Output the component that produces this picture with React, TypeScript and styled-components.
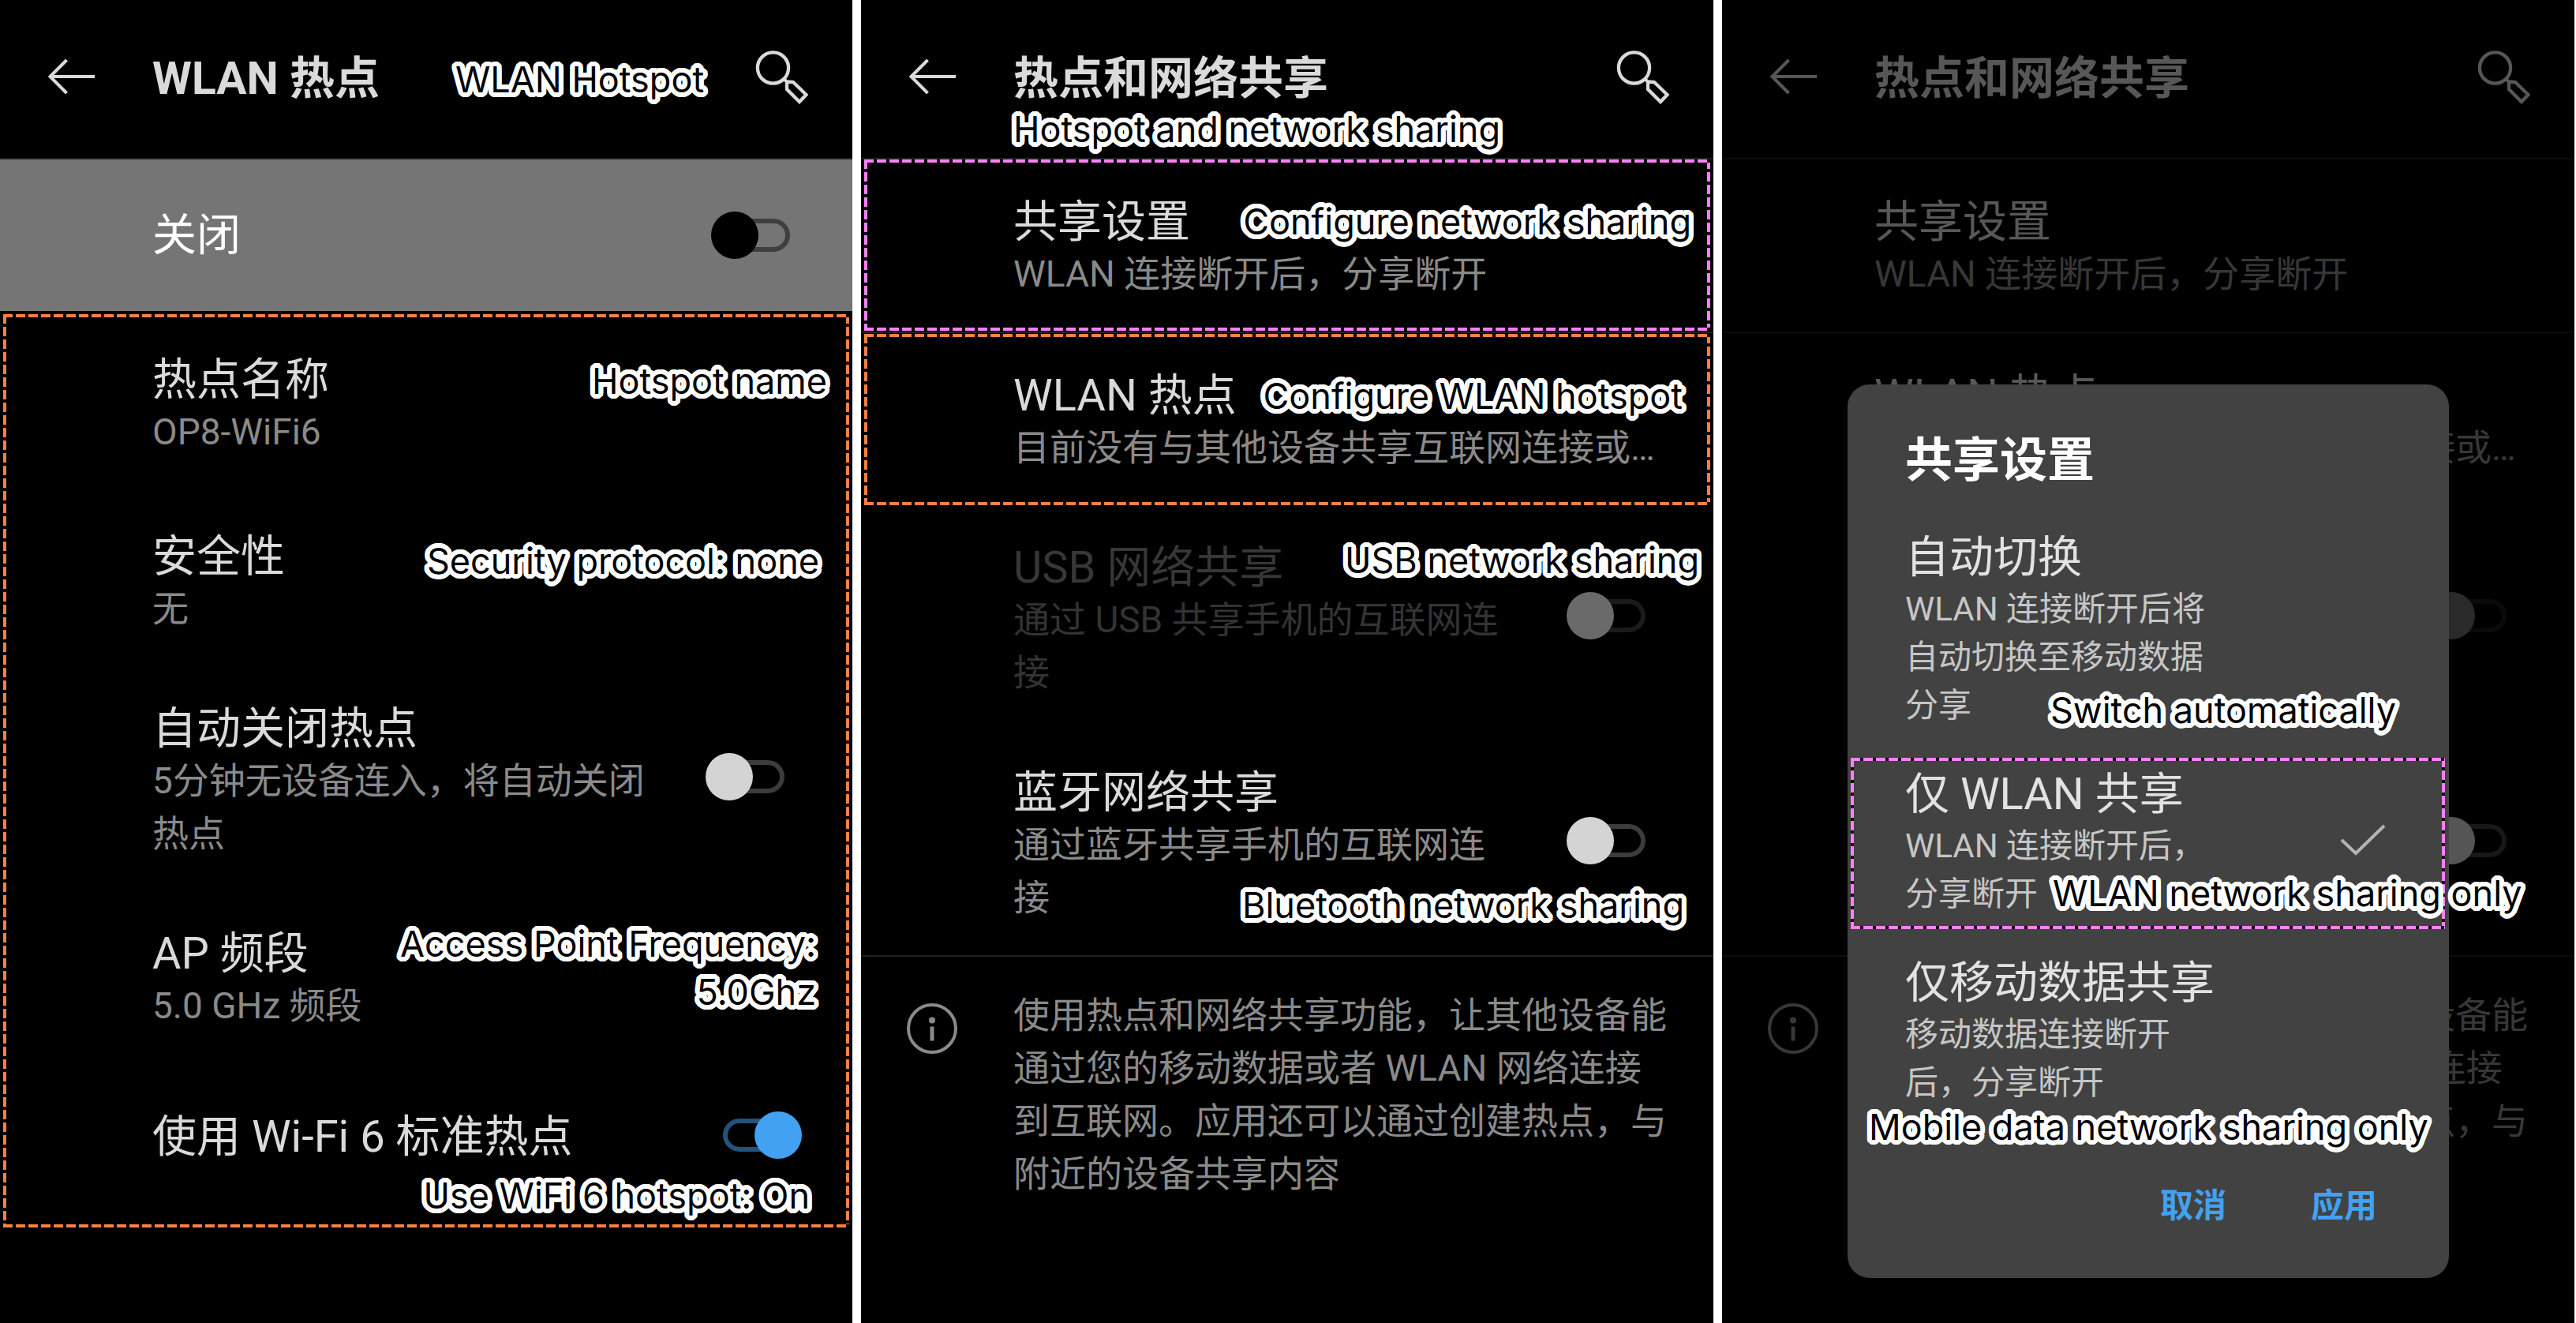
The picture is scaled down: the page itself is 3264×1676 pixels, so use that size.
import React, { useState } from 'react';
import styled, { createGlobalStyle, css } from 'styled-components';

const GlobalStyle = createGlobalStyle`
  *, *::before, *::after { box-sizing: border-box; }
  body {
    margin: 0;
    background: #fff;
    font-family: Roboto, "Noto Sans CJK SC", sans-serif;
    font-size: 46px;
    line-height: 67px;
    color: #dadada;
  }
  h1, h2, p { margin: 0; }
  button { font: inherit; color: inherit; background: none; border: 0; padding: 0; cursor: pointer; }
`;

const orange = '#ff8040';
const pink = '#ff80ff';

/* Solid round outline: copies of the text placed evenly on a circle. */
const roundOutline = (radius: number, color: string) =>
  Array.from({ length: 24 }, (_, i) => {
    const a = (i * Math.PI) / 12;
    return `${(Math.cos(a) * radius).toFixed(2)}px ${(Math.sin(a) * radius).toFixed(2)}px 0 ${color}`;
  }).join(', ');

const Board = styled.main`
  display: grid;
  grid-template-columns: repeat(3, minmax(0, 1fr));
  gap: 11px;
  padding-right: 2px;
  min-height: 100vh;
`;

const Screen = styled.section`
  position: relative;
  background: #000;
`;

const Header = styled.header`
  position: relative;
  display: flex;
  align-items: center;
  height: 202px;
  padding: 0 56px 6px 60px;
  border-bottom: 2px solid #202020;
`;

const IconButton = styled.button`
  display: flex;
  flex: none;
`;

const Title = styled.h1`
  flex: 1;
  padding: 6px 0 0 73px;
  font-size: 57px;
  font-weight: 700;
  line-height: 80px;
`;

const List = styled.div`
  position: relative;
`;

const HotspotList = styled(List)`
  padding-bottom: 26px;
`;

const Row = styled.div<{ $divided?: boolean; $first?: boolean; $single?: boolean }>`
  position: relative;
  display: flex;
  align-items: center;
  gap: 60px;
  padding: 46px 64px 39px 193px;
  ${(p) => p.$first && css`padding-top: 54px; padding-bottom: 45px;`}
  ${(p) => p.$single && css`padding-top: 60px; padding-bottom: 60px;`}
  ${(p) => p.$divided && css`border-bottom: 2px solid #202020;`}

  & > input {
    margin-bottom: ${(p) => (p.$single ? '4px' : '12px')};
  }
`;

const MasterRow = styled.div`
  display: flex;
  align-items: center;
  justify-content: space-between;
  height: 192px;
  padding: 0 57px 0 193px;
  background: #757575;
  color: #fff;
`;

const RowText = styled.div`
  flex: 1;
  min-width: 0;
`;

const RowTitle = styled.label<{ $disabled?: boolean }>`
  display: block;
  font-size: 56px;
  line-height: 66px;
  white-space: nowrap;
  color: ${(p) => (p.$disabled ? '#373737' : 'inherit')};
`;

const Summary = styled.p<{ $disabled?: boolean }>`
  color: ${(p) => (p.$disabled ? '#333' : '#8a8a8a')};
`;

const Switch = styled.input.attrs({ type: 'checkbox', role: 'switch' })<{ $master?: boolean }>`
  appearance: none;
  position: relative;
  flex: none;
  width: 122px;
  height: 60px;
  margin: 0;

  &::before {
    content: '';
    position: absolute;
    inset: 9px 22px;
    border: 6px solid ${(p) => (p.$master ? '#3f3f3f' : '#3c3c3c')};
    border-radius: 21px;
  }
  &::after {
    content: '';
    position: absolute;
    top: 0;
    left: 0;
    width: 60px;
    height: 60px;
    border-radius: 50%;
    background: ${(p) => (p.$master ? '#000' : '#d4d4d4')};
  }
  &:disabled::before { border-color: #1b1b1b; }
  &:disabled::after { background: #6a6a6a; }
  &:checked::before { border-color: #22537c; }
  &:checked::after { left: auto; right: 0; background: #42a1f1; }
`;

const Note = styled.span<{ $top: number; $right?: number; $left?: number }>`
  position: absolute;
  z-index: 2;
  top: ${(p) => p.$top}px;
  ${(p) => p.$right !== undefined && `right: ${p.$right}px;`}
  ${(p) => p.$left !== undefined && `left: ${p.$left}px;`}
  width: max-content;
  font-family: Inter, "Liberation Sans", sans-serif;
  font-size: 45px;
  font-weight: 400;
  line-height: 61px;
  text-align: right;
  white-space: pre-line;
  color: #000;
  text-shadow: ${roundOutline(6, '#fff')};
  pointer-events: none;
`;

const Outline = styled.span<{ $color: string; $inset?: string }>`
  position: absolute;
  z-index: 1;
  inset: ${(p) => p.$inset ?? '4px'};
  pointer-events: none;
  --across: linear-gradient(90deg, ${(p) => p.$color} 12px, #000 12px);
  --down: linear-gradient(${(p) => p.$color} 12px, #000 12px);
  background:
    var(--across) 0 0 / 16px 4px repeat-x,
    var(--across) 0 100% / 16px 4px repeat-x,
    var(--down) 0 0 / 4px 16px repeat-y,
    var(--down) 100% 0 / 4px 16px repeat-y;
`;

const Info = styled.div`
  display: flex;
  align-items: flex-start;
  gap: 71px;
  padding: 41px 56px 42px 58px;
  border-top: 2px solid #202020;
`;

const InfoIcon = styled.svg`
  flex: none;
  margin-top: 18px;
`;

const Scrim = styled.div`
  position: absolute;
  inset: 0;
  display: flex;
  align-items: flex-start;
  padding: 487px 159px 0;
  background: rgba(0, 0, 0, 0.6);
`;

const Dialog = styled.form`
  flex: 1;
  min-width: 0;
  padding-top: 57px;
  border-radius: 28px;
  background: #424242;
`;

const DialogTitle = styled.h2`
  padding: 0 73px 20px;
  font-size: 60px;
  font-weight: 700;
  line-height: 80px;
  color: #fff;
`;

const Option = styled.label`
  position: relative;
  display: flex;
  align-items: center;
  justify-content: space-between;
  padding: 28px 80px 20px 73px;
`;

const OptionText = styled.span`
  width: 400px;
`;

const OptionTitle = styled.span`
  display: block;
  font-size: 56px;
  line-height: 69px;
  white-space: nowrap;
  color: #e2e2e2;
`;

const OptionSummary = styled.span`
  display: block;
  font-size: 42px;
  line-height: 61px;
  color: #c6c6c6;
`;

const HiddenRadio = styled.input.attrs({ type: 'radio' })`
  position: absolute;
  opacity: 0;
`;

const CheckMark = styled.svg`
  margin-bottom: 8px;
`;

const Actions = styled.div`
  display: flex;
  justify-content: flex-end;
  gap: 35px;
  padding: 75px 55px 61px;
`;

const ActionButton = styled.button.attrs({ type: 'button' })`
  && {
    padding: 0 36px;
    font-size: 42px;
    font-weight: 700;
    line-height: 61px;
    color: #42a1f1;
  }
`;

function BackIcon() {
  return (
    <svg width="60" height="46" viewBox="0 0 60 46" fill="none" stroke="currentColor" strokeWidth="4">
      <path d="M3.500 23H60M24.500 2L3.500 23l21 21" />
    </svg>
  );
}

function SearchIcon() {
  return (
    <svg width="68" height="70" viewBox="0 0 68 70" fill="none" stroke="currentColor" strokeWidth="4.300">
      <circle cx="23.500" cy="24" r="19.600" />
      <path d="M37 38l4 3.500 8 0.500 16.500 16-8.500 9-16-16v-9.500" />
    </svg>
  );
}

function CheckIcon() {
  return (
    <CheckMark width="58" height="42" viewBox="0 0 58 42" fill="none" stroke="#b4b4b4" strokeWidth="4">
      <path d="M2 21l18 17L56 3" />
    </CheckMark>
  );
}

function TopBar({ title, children }: { title: string; children?: React.ReactNode }) {
  return (
    <Header>
      <IconButton type="button" aria-label="返回"><BackIcon /></IconButton>
      <Title>{title}</Title>
      <IconButton type="button" aria-label="搜索"><SearchIcon /></IconButton>
      {children}
    </Header>
  );
}

function HotspotScreen() {
  const [master, setMaster] = useState(false);
  const [autoOff, setAutoOff] = useState(false);
  const [wifi6, setWifi6] = useState(true);
  return (
    <Screen>
      <TopBar title="WLAN 热点">
        <Note $top={70} $left={577}>WLAN Hotspot</Note>
      </TopBar>
      <MasterRow>
        <RowTitle htmlFor="master">关闭</RowTitle>
        <Switch id="master" $master checked={master} onChange={() => setMaster(!master)} />
      </MasterRow>
      <HotspotList>
        <Row $first>
          <RowText>
            <RowTitle as="div">热点名称</RowTitle>
            <Summary>OP8-WiFi6</Summary>
          </RowText>
          <Note $top={58} $right={32}>Hotspot name</Note>
        </Row>
        <Row>
          <RowText>
            <RowTitle as="div">安全性</RowTitle>
            <Summary>无</Summary>
          </RowText>
          <Note $top={54} $right={42}>Security protocol: none</Note>
        </Row>
        <Row>
          <RowText>
            <RowTitle htmlFor="auto-off">自动关闭热点</RowTitle>
            <Summary>5分钟无设备连入，将自动关闭热点</Summary>
          </RowText>
          <Switch id="auto-off" checked={autoOff} onChange={() => setAutoOff(!autoOff)} />
        </Row>
        <Row>
          <RowText>
            <RowTitle as="div">AP 频段</RowTitle>
            <Summary>5.0 GHz 频段</Summary>
          </RowText>
          <Note $top={36} $right={46}>{'Access Point Frequency:\n5.0Ghz'}</Note>
        </Row>
        <Row $single>
          <RowText>
            <RowTitle htmlFor="wifi6">使用 Wi-Fi 6 标准热点</RowTitle>
          </RowText>
          <Switch id="wifi6" checked={wifi6} onChange={() => setWifi6(!wifi6)} />
          <Note $top={137} $right={54}>Use WiFi 6 hotspot: On</Note>
        </Row>
        <Outline $color={orange} />
      </HotspotList>
    </Screen>
  );
}

function SharingScreen({ id, annotated, children }: { id: string; annotated?: boolean; children?: React.ReactNode }) {
  const [bluetooth, setBluetooth] = useState(false);
  return (
    <Screen>
      <TopBar title="热点和网络共享">
        {annotated && <Note $top={133} $left={193}>Hotspot and network sharing</Note>}
      </TopBar>
      <List>
        <Row $divided>
          <RowText>
            <RowTitle as="div">共享设置</RowTitle>
            <Summary>WLAN 连接断开后，分享断开</Summary>
          </RowText>
          {annotated && <Outline $color={pink} $inset="0 4px 1px" />}
          {annotated && <Note $top={48} $right={28}>Configure network sharing</Note>}
        </Row>
        <Row>
          <RowText>
            <RowTitle as="div">WLAN 热点</RowTitle>
            <Summary>目前没有与其他设备共享互联网连接或…</Summary>
          </RowText>
          {annotated && <Outline $color={orange} $inset="1px 4px 0" />}
          {annotated && <Note $top={49} $right={39}>Configure WLAN hotspot</Note>}
        </Row>
        <Row>
          <RowText>
            <RowTitle htmlFor={`${id}-usb`} $disabled>USB 网络共享</RowTitle>
            <Summary $disabled>通过 USB 共享手机的互联网连接</Summary>
          </RowText>
          <Switch id={`${id}-usb`} disabled />
          {annotated && <Note $top={39} $right={18}>USB network sharing</Note>}
        </Row>
        <Row>
          <RowText>
            <RowTitle htmlFor={`${id}-bt`}>蓝牙网络共享</RowTitle>
            <Summary>通过蓝牙共享手机的互联网连接</Summary>
          </RowText>
          <Switch id={`${id}-bt`} checked={bluetooth} onChange={() => setBluetooth(!bluetooth)} />
          {annotated && <Note $top={191} $right={37}>Bluetooth network sharing</Note>}
        </Row>
      </List>
      <Info>
        <InfoIcon width="64" height="64" viewBox="0 0 64 64" fill="none">
          <circle cx="32" cy="32" r="30" stroke="#8a8a8a" strokeWidth="4" />
          <circle cx="32" cy="21.500" r="4" fill="#8a8a8a" />
          <path d="M32 29.500v18" stroke="#8a8a8a" strokeWidth="5" />
        </InfoIcon>
        <Summary>使用热点和网络共享功能，让其他设备能通过您的移动数据或者 WLAN 网络连接到互联网。应用还可以通过创建热点，与附近的设备共享内容</Summary>
      </Info>
      {children}
    </Screen>
  );
}

function SharingDialog() {
  const [mode, setMode] = useState('wlan');
  return (
    <Scrim>
      <Dialog role="dialog" aria-labelledby="dialog-title">
        <DialogTitle id="dialog-title">共享设置</DialogTitle>
        <Option>
          <HiddenRadio name="mode" checked={mode === 'auto'} onChange={() => setMode('auto')} />
          <OptionText>
            <OptionTitle>自动切换</OptionTitle>
            <OptionSummary>WLAN 连接断开后将自动切换至移动数据分享</OptionSummary>
          </OptionText>
          {mode === 'auto' && <CheckIcon />}
          <Note $top={225} $left={257}>Switch automatically</Note>
        </Option>
        <Option>
          <HiddenRadio name="mode" checked={mode === 'wlan'} onChange={() => setMode('wlan')} />
          <OptionText>
            <OptionTitle>仅 WLAN 共享</OptionTitle>
            <OptionSummary>WLAN 连接断开后，分享断开</OptionSummary>
          </OptionText>
          {mode === 'wlan' && <CheckIcon />}
          <Outline $color={pink} $inset="16px 5px 6px 4px" />
          <Note $top={157} $left={260}>WLAN network sharing only</Note>
        </Option>
        <Option>
          <HiddenRadio name="mode" checked={mode === 'mobile'} onChange={() => setMode('mobile')} />
          <OptionText>
            <OptionTitle>仅移动数据共享</OptionTitle>
            <OptionSummary>移动数据连接断开后，分享断开</OptionSummary>
          </OptionText>
          {mode === 'mobile' && <CheckIcon />}
          <Note $top={214} $left={27}>Mobile data network sharing only</Note>
        </Option>
        <Actions>
          <ActionButton>取消</ActionButton>
          <ActionButton>应用</ActionButton>
        </Actions>
      </Dialog>
    </Scrim>
  );
}

export default function App() {
  return (
    <>
      <GlobalStyle />
      <Board lang="zh-CN">
        <HotspotScreen />
        <SharingScreen id="sharing" annotated />
        <SharingScreen id="behind">
          <SharingDialog />
        </SharingScreen>
      </Board>
    </>
  );
}
